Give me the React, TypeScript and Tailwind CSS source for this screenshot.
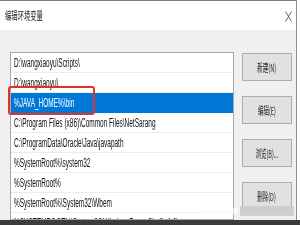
import React from "react";

const rows = [
  "D:\\wangxiaoyu\\Scripts\\",
  "D:\\wangxiaoyu\\",
  "%JAVA_HOME%\\bin",
  "C:\\Program Files (x86)\\Common Files\\NetSarang",
  "C:\\ProgramData\\Oracle\\Java\\javapath",
  "%SystemRoot%\\system32",
  "%SystemRoot%",
  "%SystemRoot%\\System32\\Wbem",
  "%SYSTEMROOT%\\System32\\WindowsPowerShell\\v1.0\\",
];

const buttons = ["新建(N)", "编辑(E)", "浏览(B)...", "删除(D)"];

export default function App() {
  return (
    <div className="relative w-[300px] h-[225px] overflow-hidden bg-white font-['Liberation_Sans','Noto_Sans_CJK_SC',sans-serif]">
      <div className="flex flex-col w-[297px] h-[220px] border-r border-[#8c8c8c]">
        {/* title bar */}
        <div className="flex items-center justify-between h-[30px] bg-white border-t border-[#7a7a7a] pl-[5px] pr-[4px]">
          <span className="inline-block whitespace-nowrap origin-left scale-x-[0.55] text-[11.5px] leading-none text-[#1e1e1e] font-['Noto_Sans_CJK_SC',sans-serif] mt-[1px]">
            编辑环境变量
          </span>
          <svg width="7" height="11" viewBox="0 0 7 11" className="mt-[1px]">
            <path d="M0.5 0.5 L6.5 10.5 M6.5 0.5 L0.5 10.5" stroke="#555" strokeWidth="0.9" fill="none" />
          </svg>
        </div>
        {/* body */}
        <div className="flex flex-1 gap-[8px] bg-[#f0f0f0] pl-[10px] pt-[22px] overflow-hidden">
          <div className="flex flex-col w-[224px] shrink-0 bg-white border border-[#a8a8a8] overflow-hidden">
            {rows.map((r, i) => (
              <div
                key={i}
                className={
                  i === 2
                    ? "flex items-center h-[20px] shrink-0 px-[3px] bg-[#0078d7] text-white"
                    : "flex items-center h-[20px] shrink-0 px-[3px] border-b border-[#ececec] text-[#111]"
                }
              >
                <span className="inline-block whitespace-nowrap origin-left scale-x-[0.54] text-[12px] leading-none">
                  {r}
                </span>
              </div>
            ))}
          </div>
          <div className="flex flex-col gap-[15px] pt-[1px]">
            {buttons.map((b) => (
              <div
                key={b}
                className="flex items-center justify-center w-[50px] h-[28px] shrink-0 bg-[#e1e1e1] border border-[#adadad]"
              >
                <span className="inline-block whitespace-nowrap scale-x-[0.5] text-[11px] leading-none text-[#222] font-['Noto_Sans_CJK_SC',sans-serif]">
                  {b}
                </span>
              </div>
            ))}
          </div>
        </div>
      </div>
      {/* screen bottom edge */}
      <div className="h-[5px] bg-[#3c3c3c]" />

      {/* red highlight box */}
      <div className="absolute left-[8px] top-[86px] w-[87px] h-[29px] border-2 border-[#e2322a] rounded-[3px]" />

      {/* watermark */}
      <div className="absolute left-[200px] top-[206px] flex items-center h-[10px]">
        <div className="w-[38px] h-[6px] bg-white/70 blur-[1px]" />
        <div className="w-[54px] h-[10px] bg-[#cbcbcb]/90 ml-[2px]" />
      </div>
    </div>
  );
}
